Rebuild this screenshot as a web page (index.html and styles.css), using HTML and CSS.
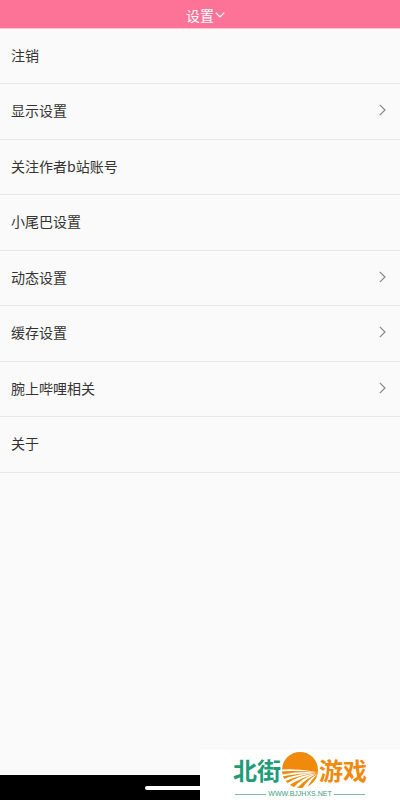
FILE: index.html
```html
<!DOCTYPE html>
<html lang="zh-CN">
<head>
<meta charset="utf-8">
<meta name="viewport" content="width=device-width, initial-scale=1">
<title>设置</title>
<link rel="stylesheet" href="styles.css">
</head>
<body>
<header class="topbar">
  <button class="title" type="button">设置<svg class="caret" viewBox="0 0 10 6" aria-hidden="true"><path d="M.7.7 5 5 9.3.7"/></svg></button>
</header>
<main class="content">
  <ul class="settings">
    <li><button class="row" type="button">注销</button></li>
    <li><button class="row" type="button">显示设置<svg class="arrow" viewBox="0 0 7 12" aria-hidden="true"><path d="M.8.8 6 6 .8 11.2"/></svg></button></li>
    <li><button class="row" type="button">关注作者b站账号</button></li>
    <li><button class="row" type="button">小尾巴设置</button></li>
    <li><button class="row" type="button">动态设置<svg class="arrow" viewBox="0 0 7 12" aria-hidden="true"><path d="M.8.8 6 6 .8 11.2"/></svg></button></li>
    <li><button class="row" type="button">缓存设置<svg class="arrow" viewBox="0 0 7 12" aria-hidden="true"><path d="M.8.8 6 6 .8 11.2"/></svg></button></li>
    <li><button class="row" type="button">腕上哔哩相关<svg class="arrow" viewBox="0 0 7 12" aria-hidden="true"><path d="M.8.8 6 6 .8 11.2"/></svg></button></li>
    <li><button class="row" type="button">关于</button></li>
  </ul>
</main>
<footer class="navbar"><span class="handle"></span></footer>
<aside class="watermark">
  <div class="brand">
    <span class="brand-green">北街</span>
    <svg class="sun" viewBox="0 0 36 36" aria-hidden="true">
      <circle cx="18" cy="18" r="18" fill="#ef8a0c"/>
      <g fill="#fff">
        <path d="M0 17.6Q18 16.6 35 20Q18 18.6 0 19.2Z"/>
        <path d="M0 22.4Q18 19 35 20.4Q18 20.8 0 24.2Z"/>
        <path d="M1 27.4Q17 21 35 20.8Q18 23 2 29.4Z"/>
        <path d="M4 32Q18 22.6 35 21.2Q20 25 6 34Z"/>
        <path d="M11 36Q21 25 35 21.6Q24 27 14 37Z"/>
        <path d="M20 37Q26 27 35.4 22Q29 28 24 37Z"/>
      </g>
    </svg>
    <span class="brand-orange">游戏</span>
  </div>
  <div class="site">WWW.BJJHXS.NET</div>
</aside>
</body>
</html>
```
FILE: styles.css
```css
* {
  box-sizing: border-box;
}

body {
  margin: 0;
  min-height: 100vh;
  display: flex;
  flex-direction: column;
  background: #fafafa;
  color: #333;
  font-family: "Noto Sans CJK SC", sans-serif;
  font-size: 14px;
  line-height: 20px;
}

button {
  border: 0;
  background: none;
  color: inherit;
  font: inherit;
}

.topbar {
  display: flex;
  justify-content: center;
  padding: 5px 0 3px;
  border-bottom: 1px solid #fdc4d2;
  background: #fd7297;
  background-clip: padding-box;
  color: #fff;
}

.title {
  display: flex;
  align-items: center;
  gap: 1px;
  padding: 0 0 0 11px;
}

.caret {
  width: 10px;
  height: 6px;
}

.caret,
.arrow {
  fill: none;
  stroke: currentColor;
  stroke-width: 1.2;
}

.content {
  flex: 1;
}

.settings {
  margin: 0;
  padding: 0;
  list-style: none;
}

.row {
  display: flex;
  align-items: center;
  justify-content: space-between;
  width: 100%;
  padding: 16px 14px 18px 11px;
  border-bottom: 1px solid #e8e8e8;
  text-align: left;
}

.settings li:nth-child(even) .row {
  padding-bottom: 19px;
}

.arrow {
  width: 7px;
  height: 12px;
  color: #888;
}

.navbar {
  display: flex;
  justify-content: center;
  align-items: center;
  height: 25px;
  background: #000;
}

.handle {
  width: 110px;
  height: 4px;
  border-radius: 2px;
  background: #fff;
}

.watermark {
  position: fixed;
  right: 0;
  bottom: 0;
  width: 200px;
  height: 50px;
  background: #fff;
}

.brand {
  display: flex;
  justify-content: center;
  align-items: center;
  gap: 1px;
  padding-top: 2px;
  font-size: 24px;
  font-weight: 700;
  line-height: 36px;
}

.brand-green {
  color: #1e9c78;
}

.brand-orange {
  color: #ef8a0c;
}

.sun {
  width: 36px;
  height: 36px;
}

.site {
  display: flex;
  justify-content: center;
  align-items: center;
  gap: 2px;
  color: #3f9c83;
  font-family: "Liberation Sans", sans-serif;
  font-size: 7px;
  line-height: 12px;
}

.site::before,
.site::after {
  content: "";
  width: 31px;
  height: 1px;
  background: #7dbbaa;
}
```
